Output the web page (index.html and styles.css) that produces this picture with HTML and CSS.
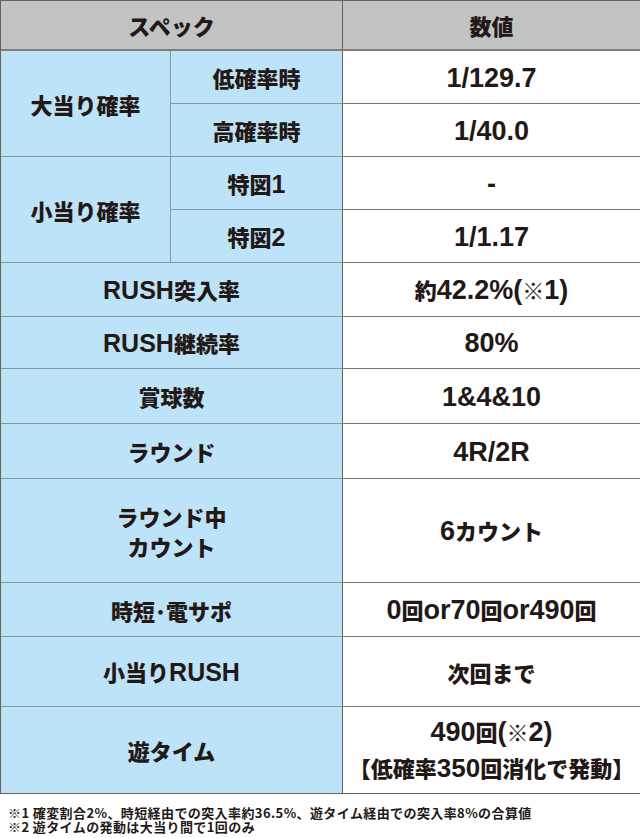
FILE: index.html
```html
<!DOCTYPE html>
<html lang="ja">
<head>
<meta charset="utf-8">
<link rel="stylesheet" href="styles.css">
<title>スペック</title>
</head>
<body>
<div class="spec">
  <div class="cell head span2"><span class="t">スペック</span></div>
  <div class="cell head val"><span class="t">数値</span></div>

  <div class="cell label rows2"><span class="t">大当り確率</span></div>
  <div class="cell label sub"><span class="t">低確率時</span></div>
  <div class="cell val"><span class="t"><span class="en">1/129.7</span></span></div>
  <div class="cell label sub"><span class="t">高確率時</span></div>
  <div class="cell val"><span class="t"><span class="en">1/40.0</span></span></div>

  <div class="cell label rows2"><span class="t">小当り確率</span></div>
  <div class="cell label sub"><span class="t">特図<span class="en">1</span></span></div>
  <div class="cell val"><span class="t"><span class="en">-</span></span></div>
  <div class="cell label sub"><span class="t">特図<span class="en">2</span></span></div>
  <div class="cell val"><span class="t"><span class="en">1/1.17</span></span></div>

  <div class="cell label span2"><span class="t"><span class="en">RUSH</span>突入率</span></div>
  <div class="cell val"><span class="t">約<span class="en">42.2%(</span>※<span class="en">1)</span></span></div>
  <div class="cell label span2"><span class="t"><span class="en">RUSH</span>継続率</span></div>
  <div class="cell val"><span class="t"><span class="en">80%</span></span></div>
  <div class="cell label span2"><span class="t">賞球数</span></div>
  <div class="cell val"><span class="t"><span class="en">1&amp;4&amp;10</span></span></div>
  <div class="cell label span2"><span class="t">ラウンド</span></div>
  <div class="cell val"><span class="t"><span class="en">4R/2R</span></span></div>
  <div class="cell label span2"><span class="t">ラウンド中<br>カウント</span></div>
  <div class="cell val"><span class="t"><span class="en">6</span>カウント</span></div>
  <div class="cell label span2"><span class="t">時短･電サポ</span></div>
  <div class="cell val"><span class="t"><span class="en">0</span>回<span class="en">or70</span>回<span class="en">or490</span>回</span></div>
  <div class="cell label span2"><span class="t">小当り<span class="en">RUSH</span></span></div>
  <div class="cell val"><span class="t">次回まで</span></div>
  <div class="cell label span2 last"><span class="t">遊タイム</span></div>
  <div class="cell val last two"><span class="t"><span class="en">490</span>回<span class="en">(</span>※<span class="en">2)</span><br><span class="narrow">【低確率<span class="en">350</span>回消化で発動】</span></span></div>
</div>
<div class="notes">
  <p>※1 確変割合2%、時短経由での突入率約36.5%、遊タイム経由での突入率8%の合算値</p>
  <p>※2 遊タイムの発動は大当り間で1回のみ</p>
</div>
</body>
</html>
```
FILE: styles.css
```css
* { box-sizing: border-box; }
html, body { margin: 0; padding: 0; background: #ffffff; }
body {
  width: 640px;
  color: #231815;
  font-family: "Liberation Sans", "Noto Sans CJK JP", sans-serif;
  font-weight: 700;
}
.spec {
  display: grid;
  grid-template-columns: 170px 172px 298px;
  grid-template-rows: 50px 53px 53px 53px 53px 54px 52px 55px 55px 104px 54px 70px 87px;
  border-top: 1px solid #6b5f5b;
  border-left: 1px solid #6b5f5b;
  width: 640px;
}
.cell {
  display: flex;
  align-items: center;
  justify-content: center;
  text-align: center;
  border-right: 1px solid #6b5f5b;
  border-bottom: 1px solid #7a706c;
  font-family: "Noto Sans CJK JP", sans-serif;
  font-weight: 900;
  font-size: 22px;
  line-height: 30px;
}
.t { display: block; white-space: nowrap; }
.en {
  font-family: "Liberation Sans", sans-serif;
  font-weight: 700;
}
.head {
  background: #c2c3c3;
  font-size: 22px;
  border-bottom: 2px solid #857b77;
}
.label {
  background: #bce3f8;
  border-right-color: #8a979e;
  border-bottom-color: #8a979e;
}
.label .en { font-size: 25px; }
.label.span2, .label.sub { border-right-color: #6b5f5b; }
.rows2 { grid-row: span 2; }
.span2 { grid-column: span 2; }
.val {
  background: #ffffff;
  font-size: 22px;
}
.val .en { font-size: 27px; }
.head.val { background: #c2c3c3; }
.last { border-bottom-color: #6b5f5b; }
.two { line-height: 35px; }
.narrow { letter-spacing: 0; }
.narrow .en { font-size: 26px; }
.notes {
  padding: 12px 0 0 8px;
  font-family: "Noto Sans CJK JP", sans-serif;
  font-weight: 700;
  font-size: 13px;
  line-height: 14px;
  letter-spacing: 0.4px;
}
.notes p { margin: 0; }
```
